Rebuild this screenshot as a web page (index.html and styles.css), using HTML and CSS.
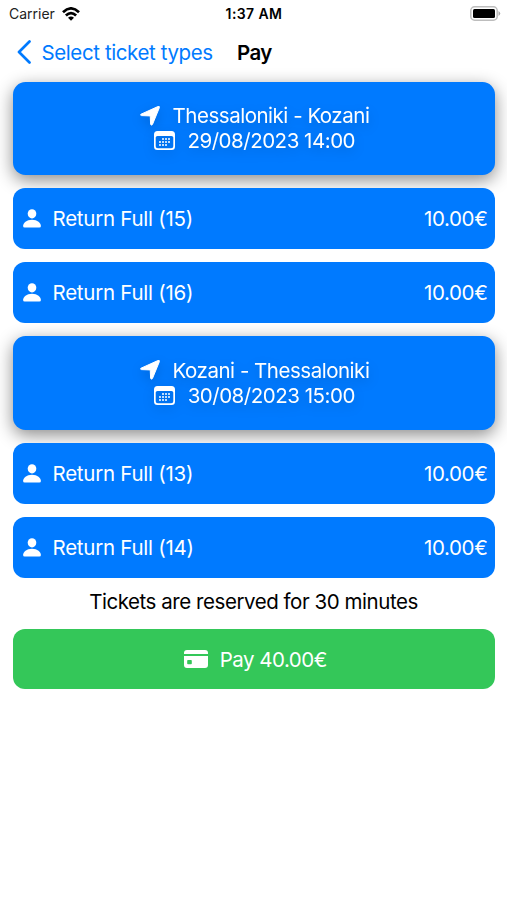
FILE: index.html
```html
<!DOCTYPE html>
<html lang="en">
<head>
<meta charset="utf-8">
<title>Pay</title>
<link rel="stylesheet" href="styles.css">
</head>
<body>
<svg class="symbols" aria-hidden="true">
  <symbol id="arrow" viewBox="0 0 20 20"><path d="M1 8.200 17.800.6q2.100-.8 1.500 1.200L12.500 18.400q-1.100 1.700-1.900-.2L10.300 10.700q0-.8-.8-.8L1.500 9.600q-1.600-.4-.5-1.400Z" stroke="currentColor" stroke-width="1"/></symbol>
  <symbol id="calendar" viewBox="0 0 21 19"><path fill-rule="evenodd" d="M3.500 0h14Q21 0 21 3.500v12Q21 19 17.500 19h-14Q0 19 0 15.500v-12Q0 0 3.500 0ZM3.500 5Q1.700 5 1.700 6.500v8.700q0 2.100 2.100 2.100h13.400q2.100 0 2.100-2.100V6.500Q19.300 5 17.500 5Z"/><path d="M8 8H17M5 11H17M5 14H14" fill="none" stroke="currentColor" stroke-width="2" stroke-dasharray="2 1" opacity=".75"/></symbol>
  <symbol id="person" viewBox="0 0 18 19"><ellipse cx="9" cy="4.800" rx="4.300" ry="4.600"/><path d="M1.600 18.500Q.1 18.500.1 17C.1 14 3.600 10.700 9 10.700s8.900 3.300 8.900 6.300q0 1.500-1.500 1.500Z"/></symbol>
  <symbol id="card" viewBox="0 0 24 18"><path d="M0 4V3Q0 0 3 0h18q3 0 3 3v1Z"/><path fill-rule="evenodd" d="M0 6h24v9q0 3-3 3H3q-3 0-3-3ZM4 10q-.8 0-.8.800v2.600q0 .8.8.8h3q.8 0 .8-.8v-2.600q0-.8-.8-.8Z"/></symbol>
</svg>
<header class="status">
  <div class="carrier"><span>Carrier</span>
    <svg class="wifi" viewBox="0 0 18 14" fill="none" stroke="currentColor" stroke-width="2.700"><path d="M1 5.200Q9-2.400 17 5.200M3.900 8.500Q9 3.600 14.100 8.500"/><path d="M9 13.700 6 10.800Q9 8.400 12 10.800Z" fill="currentColor" stroke="none"/></svg>
  </div>
  <time class="clock">1:37 AM</time>
  <svg class="battery" viewBox="0 0 31 15"><rect x=".8" y=".8" width="26.400" height="13.400" rx="3.800" fill="#fff" stroke="#bdbdbd" stroke-width="1.500"/><rect x="3" y="3" width="22" height="9" rx="1.500"/><path d="M28.500 5Q32 7.500 28.500 10Z" fill="#aaa"/></svg>
</header>
<nav class="nav">
  <svg class="back" viewBox="0 0 14 24"><path d="M12.500 1.500 2 12l10.500 10.500" fill="none" stroke="currentColor" stroke-width="2.700" stroke-linecap="round" stroke-linejoin="round"/></svg>
  <a class="back-label">Select ticket types</a>
  <h1 class="title">Pay</h1>
</nav>
<main class="list">
  <section class="trip">
    <div class="line"><svg class="i-arrow"><use href="#arrow"/></svg><span class="route">Thessaloniki - Kozani</span></div>
    <div class="line"><svg class="i-cal"><use href="#calendar"/></svg><span class="date">29/08/2023 14:00</span></div>
  </section>
  <div class="ticket"><svg class="i-person"><use href="#person"/></svg><span class="name">Return Full (15)</span><span class="price">10.00€</span></div>
  <div class="ticket"><svg class="i-person"><use href="#person"/></svg><span class="name">Return Full (16)</span><span class="price">10.00€</span></div>
  <section class="trip">
    <div class="line"><svg class="i-arrow"><use href="#arrow"/></svg><span class="route">Kozani - Thessaloniki</span></div>
    <div class="line"><svg class="i-cal"><use href="#calendar"/></svg><span class="date">30/08/2023 15:00</span></div>
  </section>
  <div class="ticket"><svg class="i-person"><use href="#person"/></svg><span class="name">Return Full (13)</span><span class="price">10.00€</span></div>
  <div class="ticket"><svg class="i-person"><use href="#person"/></svg><span class="name">Return Full (14)</span><span class="price">10.00€</span></div>
</main>
<p class="note">Tickets are reserved for 30 minutes</p>
<button class="pay"><svg class="i-card"><use href="#card"/></svg><span>Pay 40.00€</span></button>
</body>
</html>
```
FILE: styles.css
```css
* { box-sizing: border-box; }
body {
  margin: 0;
  height: 900px;
  overflow: hidden;
  background: #fff;
  color: #000;
  font: 400 20.5px/25px Inter, "Liberation Sans", sans-serif;
  letter-spacing: -.48px;
}
svg { display: block; flex: none; fill: currentColor; }
.symbols { width: 0; height: 0; position: absolute; }
.status {
  display: grid;
  grid-template-columns: 1fr auto 1fr;
  align-items: center;
  height: 27px;
  padding: 0 6px 0 9px;
  font-size: 14px;
  line-height: 18px;
  letter-spacing: 0;
}
.carrier { display: flex; align-items: center; gap: 7px; color: #222; }
.wifi { width: 18px; height: 14px; color: #000; fill: none; }
.clock { font-weight: 600; font-size: 14px; letter-spacing: .4px; margin-right: 2px; }
.battery { width: 31px; height: 15px; justify-self: end; }
.nav { display: flex; align-items: center; height: 50px; padding-left: 17px; }
.back { width: 14px; height: 24px; color: #007aff; }
.back-label { margin-left: 10.500px; width: 195.500px; color: #007aff; white-space: nowrap; letter-spacing: -.4px; }
.title { margin: 0; font-size: 20.5px; font-weight: 600; letter-spacing: -.6px; }
.list {
  display: flex;
  flex-direction: column;
  gap: 13.4px;
  padding: 4.600px 12.500px 0 13px;
  color: #fff;
}
.trip {
  height: 93.200px;
  padding-left: 1.500px;
  border-radius: 12.500px;
  background: #007aff;
  display: flex;
  flex-direction: column;
  justify-content: center;
  box-shadow: 0 5px 17px rgba(0, 0, 0, .46);
}
.line {
  display: flex;
  align-items: center;
  justify-content: center;
  white-space: nowrap;
  filter: drop-shadow(0 4px 6px rgba(0, 0, 0, .16));
}
.i-arrow { width: 20px; height: 20px; margin-right: 13px; }
.i-cal { width: 21px; height: 19px; margin-right: 12.500px; }
.ticket {
  position: relative;
  display: flex;
  align-items: center;
  height: 60.700px;
  padding: 0 7px 0 10px;
  border-radius: 12px;
  background: #007aff;
}
.i-person { width: 18px; height: 19px; margin-right: 11.500px; }
.name { letter-spacing: -.26px; }
.price { margin-left: auto; letter-spacing: -.35px; }
.note { margin: 11.500px 0 14.700px; text-align: center; letter-spacing: -.45px; }
.pay {
  display: flex;
  align-items: center;
  justify-content: center;
  width: 481.500px;
  height: 60.500px;
  margin-left: 13px;
  padding: 0 0 0 3px;
  border: 0;
  border-radius: 12px;
  background: #34c759;
  color: #fff;
  font: inherit;
  letter-spacing: -.5px;
}
.i-card { width: 24px; height: 18px; margin-right: 12px; }
```
